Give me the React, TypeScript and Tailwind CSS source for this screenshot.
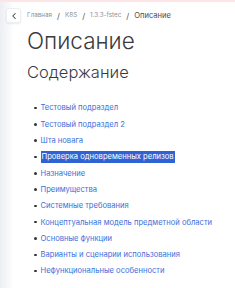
import { ChevronLeft } from "lucide-react";

const crumbs = ["Главная", "K8S", "1.3.3-fstec"];

const items = [
  "Тестовый подраздел",
  "Тестовый подраздел 2",
  "Шта новага",
  "Проверка одновременных релизов",
  "Назначение",
  "Преимущества",
  "Системные требования",
  "Концептуальная модель предметной области",
  "Основные функции",
  "Варианты и сценарии использования",
  "Нефункциональные особенности",
];

const SELECTED = 3;

const Breadcrumbs = () => {
  return (
    <div className="flex items-center gap-[6px] pl-[6px] pt-[6px]">
      <button className="flex h-[15px] w-[15px] items-center justify-center rounded-[3px] border border-[#eceef1] bg-white shadow-[0_1px_2px_rgba(0,0,0,0.08)]">
        <ChevronLeft className="h-[10px] w-[10px] text-[#444]" strokeWidth={2.5} />
      </button>
      <div className="flex items-center gap-[5px] text-[6.3px] text-[#8b9099]">
        {crumbs.map((c) => (
          <span key={c} className="flex items-center gap-[5px]">
            <span>{c}</span>
            <span className="text-[8px] text-[#555]">/</span>
          </span>
        ))}
        <span className="text-[7.6px] text-[#4a4d52]">Описание</span>
      </div>
    </div>
  );
};

const Contents = () => {
  return (
    <ul className="mt-[19px] flex flex-col pl-[34px]">
      {items.map((item, i) => (
        <li key={item} className="flex h-[16.3px] items-center gap-[4px]">
          <span className="h-[2.5px] w-[2.5px] rounded-full bg-[#333]" />
          <span
            className={
              i === SELECTED
                ? "bg-[#2f63d4] px-px text-white"
                : "text-[#3c6fd9]"
            }
          >
            {item}
          </span>
        </li>
      ))}
    </ul>
  );
};

export default function App() {
  return (
    <div
      className="h-[288px] w-[235px] overflow-hidden border-t-2 border-[#fde4e7] bg-[linear-gradient(to_right,#eceef2,#ffffff_14px)] text-[7.6px]"
      style={{ fontFamily: "Inter, 'Noto Sans', sans-serif" }}
    >
      <Breadcrumbs />
      <h1 className="mt-[6px] pl-[27px] text-[22.5px] font-light leading-[24px] text-[#3a3b3e]">
        Описание
      </h1>
      <h2 className="mt-[10px] pl-[27px] text-[16.5px] font-light leading-[18px] text-[#3a3b3e]">
        Содержание
      </h2>
      <Contents />
    </div>
  );
}
